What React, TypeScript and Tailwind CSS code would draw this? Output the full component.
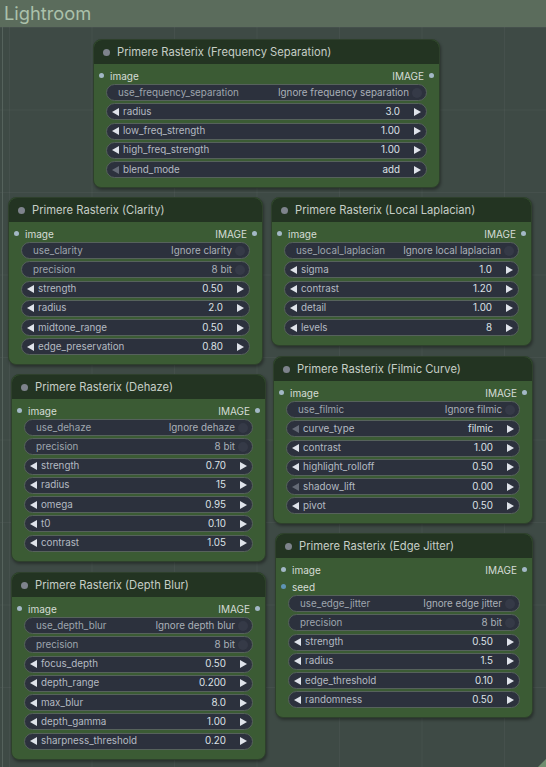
type Widget =
  | { kind: 'toggle'; label: string; value: string }
  | { kind: 'num'; label: string; value: string; leftDim?: boolean };

type NodeDef = {
  title: string;
  pos: string;
  inputs: string[];
  widgets: Widget[];
};

const nodes: NodeDef[] = [
  {
    title: 'Primere Rasterix (Frequency Separation)',
    pos: 'left-[93px] top-[39px] w-[347px]',
    inputs: ['image'],
    widgets: [
      { kind: 'toggle', label: 'use_frequency_separation', value: 'Ignore frequency separation' },
      { kind: 'num', label: 'radius', value: '3.0' },
      { kind: 'num', label: 'low_freq_strength', value: '1.00' },
      { kind: 'num', label: 'high_freq_strength', value: '1.00' },
      { kind: 'num', label: 'blend_mode', value: 'add', leftDim: true },
    ],
  },
  {
    title: 'Primere Rasterix (Clarity)',
    pos: 'left-[8px] top-[197px] w-[255px]',
    inputs: ['image'],
    widgets: [
      { kind: 'toggle', label: 'use_clarity', value: 'Ignore clarity' },
      { kind: 'toggle', label: 'precision', value: '8 bit' },
      { kind: 'num', label: 'strength', value: '0.50' },
      { kind: 'num', label: 'radius', value: '2.0' },
      { kind: 'num', label: 'midtone_range', value: '0.50' },
      { kind: 'num', label: 'edge_preservation', value: '0.80' },
    ],
  },
  {
    title: 'Primere Rasterix (Local Laplacian)',
    pos: 'left-[271px] top-[197px] w-[261px]',
    inputs: ['image'],
    widgets: [
      { kind: 'toggle', label: 'use_local_laplacian', value: 'Ignore local laplacian' },
      { kind: 'num', label: 'sigma', value: '1.0' },
      { kind: 'num', label: 'contrast', value: '1.20' },
      { kind: 'num', label: 'detail', value: '1.00' },
      { kind: 'num', label: 'levels', value: '8' },
    ],
  },
  {
    title: 'Primere Rasterix (Dehaze)',
    pos: 'left-[11px] top-[374px] w-[255px]',
    inputs: ['image'],
    widgets: [
      { kind: 'toggle', label: 'use_dehaze', value: 'Ignore dehaze' },
      { kind: 'toggle', label: 'precision', value: '8 bit' },
      { kind: 'num', label: 'strength', value: '0.70' },
      { kind: 'num', label: 'radius', value: '15' },
      { kind: 'num', label: 'omega', value: '0.95' },
      { kind: 'num', label: 't0', value: '0.10' },
      { kind: 'num', label: 'contrast', value: '1.05' },
    ],
  },
  {
    title: 'Primere Rasterix (Filmic Curve)',
    pos: 'left-[273px] top-[356px] w-[260px]',
    inputs: ['image'],
    widgets: [
      { kind: 'toggle', label: 'use_filmic', value: 'Ignore filmic' },
      { kind: 'num', label: 'curve_type', value: 'filmic', leftDim: true },
      { kind: 'num', label: 'contrast', value: '1.00' },
      { kind: 'num', label: 'highlight_rolloff', value: '0.50' },
      { kind: 'num', label: 'shadow_lift', value: '0.00', leftDim: true },
      { kind: 'num', label: 'pivot', value: '0.50' },
    ],
  },
  {
    title: 'Primere Rasterix (Depth Blur)',
    pos: 'left-[11px] top-[572px] w-[255px]',
    inputs: ['image'],
    widgets: [
      { kind: 'toggle', label: 'use_depth_blur', value: 'Ignore depth blur' },
      { kind: 'toggle', label: 'precision', value: '8 bit' },
      { kind: 'num', label: 'focus_depth', value: '0.50' },
      { kind: 'num', label: 'depth_range', value: '0.200' },
      { kind: 'num', label: 'max_blur', value: '8.0' },
      { kind: 'num', label: 'depth_gamma', value: '1.00' },
      { kind: 'num', label: 'sharpness_threshold', value: '0.20' },
    ],
  },
  {
    title: 'Primere Rasterix (Edge Jitter)',
    pos: 'left-[275px] top-[533px] w-[258px]',
    inputs: ['image', 'seed'],
    widgets: [
      { kind: 'toggle', label: 'use_edge_jitter', value: 'Ignore edge jitter' },
      { kind: 'toggle', label: 'precision', value: '8 bit' },
      { kind: 'num', label: 'strength', value: '0.50' },
      { kind: 'num', label: 'radius', value: '1.5' },
      { kind: 'num', label: 'edge_threshold', value: '0.10' },
      { kind: 'num', label: 'randomness', value: '0.50' },
    ],
  },
];

const Arrow = ({ dir, dim }: { dir: 'l' | 'r'; dim?: boolean }) => (
  <svg width="7" height="8" viewBox="0 0 7 8" className="shrink-0">
    <path d={dir === 'l' ? 'M7 0 L0 4 L7 8 Z' : 'M0 0 L7 4 L0 8 Z'} fill={dim ? '#646a76' : '#dfe3ea'} />
  </svg>
);

const WidgetRow = ({ w, first }: { w: Widget; first: boolean }) => {
  const base =
    'mx-[12px] h-[17px] rounded-full border border-[#56625c] bg-[#2c313d] flex items-center text-[9.8px] leading-none';
  return (
    <div className={`${base} ${first ? '' : 'mt-[2.3px]'}`}>
      {w.kind === 'toggle' ? (
        <>
          <span className="pl-[11px] text-[#9ea5ad] whitespace-nowrap">{w.label}</span>
          <span className="flex-1 text-right text-[#aab0b8] whitespace-nowrap">{w.value}</span>
          <span className="ml-[3px] mr-[4px] w-[10px] h-[10px] rounded-full bg-[#353a47] shrink-0" />
        </>
      ) : (
        <>
          <span className="pl-[5px] flex items-center">
            <Arrow dir="l" dim={w.leftDim} />
          </span>
          <span className="ml-[4px] text-[#b4bac2] whitespace-nowrap">{w.label}</span>
          <span className="flex-1 text-right text-[#dde1e6] whitespace-nowrap">{w.value}</span>
          <span className="ml-[14px] mr-[5px] flex items-center">
            <Arrow dir="r" />
          </span>
        </>
      )}
    </div>
  );
};

const Node = ({ n }: { n: NodeDef }) => (
  <div
    className={`absolute ${n.pos} rounded-[8px] bg-[#3b5b34] shadow-[1px_2px_3px_rgba(0,0,0,0.35)] border border-[#2e402c]`}
  >
    <div className="h-[24px] flex items-center rounded-t-[8px] bg-[#233422]">
      <span className="ml-[9px] w-[7px] h-[7px] rounded-full bg-[#7e838c]" />
      <span className="ml-[7px] text-[11.2px] text-[#c6cec6] whitespace-nowrap">{n.title}</span>
    </div>
    <div className="pt-[3px] pb-[9px]">
      {n.inputs.map((inp, i) => (
        <div key={inp} className="h-[17px] flex items-center justify-between px-[5px] text-[10px] leading-none">
          <div className="flex items-center">
            <span
              className={`w-[5px] h-[5px] rounded-full ${inp === 'seed' ? 'bg-[#5f94b4]' : 'bg-[#a3b8c6]'}`}
            />
            <span className="ml-[6px] text-[#d6dbd6]">{inp}</span>
          </div>
          {i === 0 && (
            <div className="flex items-center">
              <span className="text-[#d6dbd6]">IMAGE</span>
              <span className="ml-[5px] w-[5px] h-[5px] rounded-full bg-[#a3b8c6]" />
            </div>
          )}
        </div>
      ))}
      {n.widgets.map((w, i) => (
        <WidgetRow key={w.label + i} w={w} first={i === 0} />
      ))}
    </div>
  </div>
);

export default function App() {
  return (
    <div className="relative w-[546px] h-[767px] overflow-hidden bg-[#3e4a45] font-['Inter','Liberation_Sans',sans-serif]">
      <div className="absolute inset-0 top-[27px] bg-[linear-gradient(to_right,rgba(255,255,255,0.035)_1px,transparent_1px),linear-gradient(to_bottom,rgba(255,255,255,0.035)_1px,transparent_1px)] bg-[size:82.5px_82.5px] bg-[position:9px_0px]" />
      <div className="absolute left-[2px] top-[27px] bottom-0 w-px bg-[#55625c]" />
      <div className="relative h-[27px] bg-[#5b6c5c] pl-[4px] flex items-center">
        <span className="text-[18.3px] leading-none text-[#abc1ab]">Lightroom</span>
      </div>
      {nodes.map((n) => (
        <Node key={n.title} n={n} />
      ))}
      <svg className="absolute right-0 bottom-0" width="8" height="8" viewBox="0 0 8 8">
        <path d="M8 0 L8 8 L0 8 Z" fill="#6f8d6f" />
      </svg>
    </div>
  );
}
